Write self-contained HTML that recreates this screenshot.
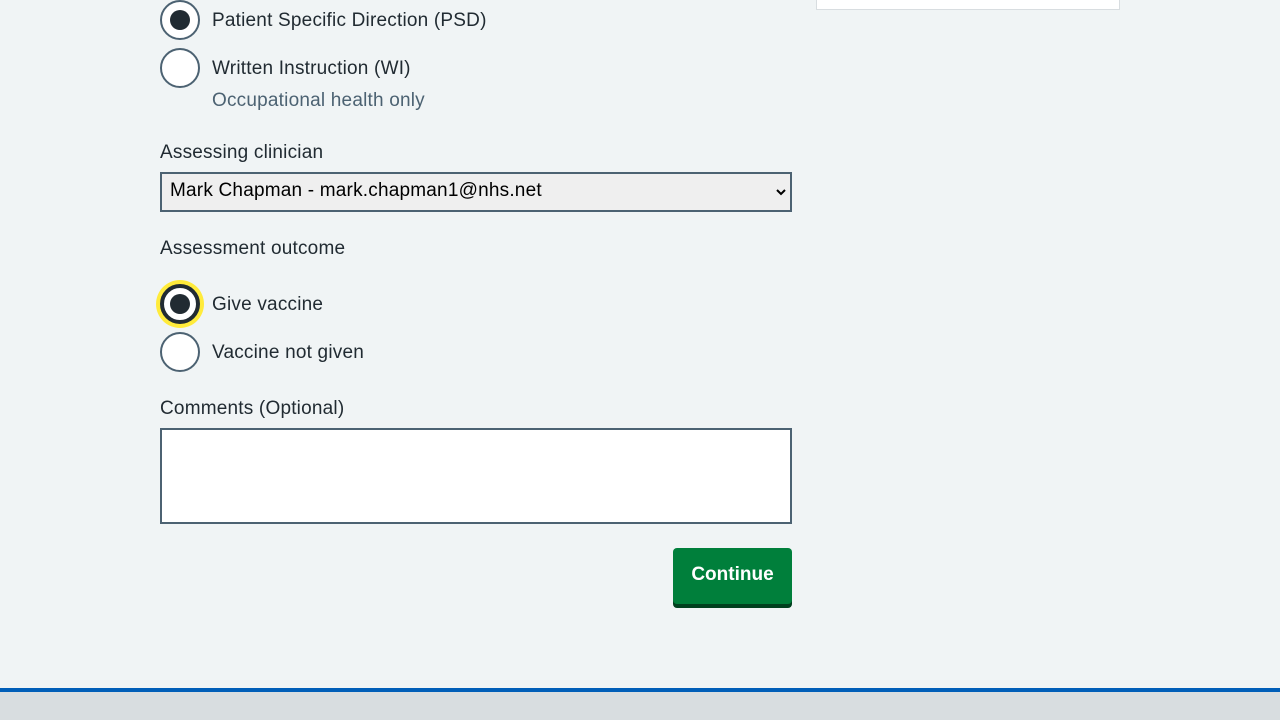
<!DOCTYPE html>
<html><head><style>
body{margin:0;width:1280px;height:720px;background:#f0f4f5;font-family:"Liberation Sans",sans-serif;color:#212b32;position:relative;overflow:hidden}
.a{position:absolute}
.r{position:absolute;left:160px;width:36px;height:36px;border:2px solid #4c6272;border-radius:50%;background:#fff}
.dot{position:absolute;left:8px;top:8px;width:20px;height:20px;border-radius:50%;background:#212b32}
.t{position:absolute;font-size:19px;line-height:24px;white-space:nowrap;letter-spacing:0.2px}
</style></head><body>
<div class="a" style="left:816px;top:-2px;width:302px;height:10px;background:#fff;border:1px solid #d8dde0"></div>
<div class="r" style="top:0"><div class="dot"></div></div>
<div class="t" style="left:212px;top:9px">Patient Specific Direction (PSD)</div>
<div class="r" style="top:48px"></div>
<div class="t" style="left:212px;top:57px">Written Instruction (WI)</div>
<div class="t" style="left:212px;top:89px;color:#4c6272">Occupational health only</div>
<div class="t" style="left:160px;top:141px">Assessing clinician</div>
<div class="a" style="left:160px;top:172px;width:628px;height:36px;border:2px solid #4c6272;background:#efefef;font-size:19px;line-height:34px;letter-spacing:0.2px"><span style="padding-left:8px;color:#000">Mark Chapman - mark.chapman1@nhs.net</span><svg style="position:absolute;right:4px;top:14px" width="10" height="8" viewBox="0 0 10 8"><path d="M1 2l4 4 4-4" fill="none" stroke="#000" stroke-width="2"/></svg></div>
<div class="t" style="left:160px;top:237px">Assessment outcome</div>
<div class="a" style="left:156px;top:280px;width:48px;height:48px;border-radius:50%;background:#ffeb3b"></div>
<div class="r" style="top:284px;border:4px solid #212b32;width:32px;height:32px"><div class="dot" style="left:6px;top:6px"></div></div>
<div class="t" style="left:212px;top:293px">Give vaccine</div>
<div class="r" style="top:332px"></div>
<div class="t" style="left:212px;top:341px">Vaccine not given</div>
<div class="t" style="left:160px;top:397px">Comments (Optional)</div>
<div class="a" style="left:160px;top:428px;width:628px;height:92px;border:2px solid #4c6272;background:#fff"></div>
<div class="a" style="left:673px;top:548px;width:119px;height:56px;background:#007f3b;border-radius:4px;box-shadow:0 4px 0 #00401e;color:#fff;font-weight:bold;font-size:19px;line-height:54px;text-align:center">Continue</div>
<div class="a" style="left:0;top:688px;width:1280px;height:4px;background:#005eb8"></div>
<div class="a" style="left:0;top:692px;width:1280px;height:28px;background:#d8dde0"></div>
</body></html>
